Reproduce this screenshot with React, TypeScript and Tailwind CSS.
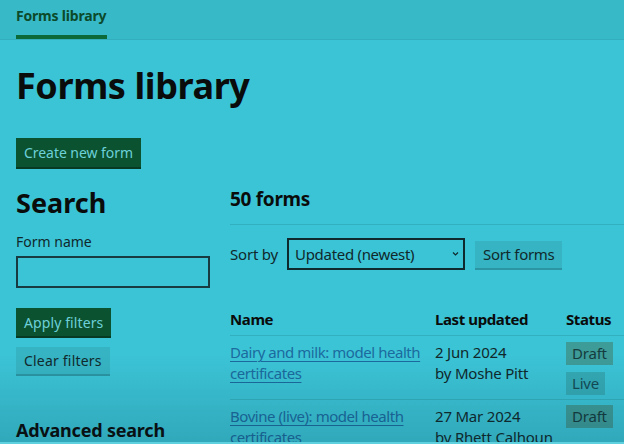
import React from "react";

const font = { fontFamily: '"Noto Sans", "Open Sans", Arial, sans-serif' };

function Tag({ children, live }: { children: React.ReactNode; live?: boolean }) {
  return (
    <span
      className={
        "inline-block px-[6px] h-[23px] leading-[23px] text-[15px] tracking-[-0.2px] " +
        (live ? "bg-[#34aab5] text-[#134b55]" : "bg-[#3d9b98] text-[#153c3e]")
      }
    >
      {children}
    </span>
  );
}

export default function App() {
  return (
    <div className="relative w-[624px] h-[444px] overflow-hidden bg-[#3bc4d6] text-[#0b1a1c]" style={font}>
      <header className="h-[40px] bg-[#38b9c8] border-b border-[#33aebd] px-4 flex items-stretch">
        <div className="relative flex items-center pb-[8px] w-[91px]">
          <span className="text-[14px] font-bold tracking-[-0.2px] text-[#0b4a2a]">Forms library</span>
          <span className="absolute left-0 right-0 bottom-0 h-[4px] bg-[#0b6a37]" />
        </div>
      </header>

      <main className="px-4">
        <h1 className="mt-[22px] text-[36px] leading-[48px] font-bold tracking-[-0.4px] text-[#0a0c0c]">Forms library</h1>

        <div className="mt-[28px]">
          <button className="h-[29px] px-[8px] bg-[#0b5230] text-[#6dd0d9] text-[14px] tracking-[-0.05px] shadow-[0_2px_0_#073a22]">
            Create new form
          </button>
        </div>

        <div className="mt-[16px] grid grid-cols-[194px_1fr] gap-x-[20px]">
          <div>
            <h2 className="text-[27px] leading-[40px] font-bold text-[#0a0c0c]">Search</h2>
            <label className="block mt-[9px] text-[14px] leading-[20px] text-[#10282b]">Form name</label>
            <div className="mt-[4px] h-[32px] border-2 border-[#173b40]" />
            <div className="mt-[20px]">
              <button className="h-[28px] px-[8px] bg-[#0b5230] text-[#6dd0d9] text-[14px] tracking-[0.1px] shadow-[0_2px_0_#073a22]">
                Apply filters
              </button>
            </div>
            <div className="mt-[11px]">
              <button className="h-[27px] px-[8px] bg-[#36b4c3] text-[#10292c] text-[14px] tracking-[0.2px] shadow-[0_2px_0_#2b95a3]">
                Clear filters
              </button>
            </div>
            <h3 className="mt-[43px] text-[18px] leading-[26px] font-bold tracking-[-0.2px] text-[#0a0c0c]">Advanced search</h3>
          </div>

          <div className="min-w-0 pt-[1px]">
            <h2 className="text-[19px] leading-[30px] font-bold tracking-[-0.3px] text-[#0a0c0c]">50 forms</h2>
            <div className="mt-[10px] border-t border-[#33b0bf] -mr-4" />
            <div className="mt-[13px] flex items-center">
              <span className="text-[15px] tracking-[-0.2px] text-[#10282b]">Sort by</span>
              <div className="ml-[9px] relative w-[178px] h-[32px] border-2 border-[#0f2a2e] flex items-center pl-[6px]">
                <span className="text-[15px] tracking-[-0.3px] text-[#10282b]">Updated (newest)</span>
                <svg className="absolute right-[4px] top-[11px]" width="7" height="6" viewBox="0 0 7 6">
                  <path d="M1 1.5 L3.5 4 L6 1.5" fill="none" stroke="#10282b" strokeWidth="1.2" />
                </svg>
              </div>
              <button className="ml-[10px] h-[27px] px-[8px] bg-[#36b4c3] text-[#10292c] text-[15px] tracking-[-0.3px] shadow-[0_2px_0_#2b95a3]">
                Sort forms
              </button>
            </div>

            <table className="mt-[39px] w-[calc(100%+16px)] border-collapse text-[15px] leading-[21px]">
              <thead>
                <tr className="border-b border-[#33b0bf] text-left">
                  <th className="w-[205px] font-bold pb-[5px] tracking-[-0.4px] text-[#0a0c0c]">Name</th>
                  <th className="w-[131px] font-bold pb-[5px] tracking-[-0.4px] text-[#0a0c0c]">Last updated</th>
                  <th className="font-bold pb-[5px] tracking-[-0.4px] text-[#0a0c0c]">Status</th>
                </tr>
              </thead>
              <tbody>
                <tr className="border-b border-[#33b0bf] align-top">
                  <td className="pt-[6px] pb-[4px]">
                    <a className="text-[#1c6a9e] tracking-[-0.45px] underline underline-offset-[3px] decoration-1">Dairy and milk: model health certificates</a>
                  </td>
                  <td className="pt-[6px] tracking-[-0.2px] text-[#10282b]">2 Jun 2024<br />by Moshe Pitt</td>
                  <td className="pt-[6px] pb-[4px]">
                    <div className="flex flex-col items-start gap-[7px]">
                      <Tag>Draft</Tag>
                      <Tag live>Live</Tag>
                    </div>
                  </td>
                </tr>
                <tr className="align-top">
                  <td className="pt-[6px]">
                    <a className="text-[#1c6a9e] tracking-[-0.45px] underline underline-offset-[3px] decoration-1">Bovine (live): model health certificates</a>
                  </td>
                  <td className="pt-[6px] tracking-[-0.2px] text-[#10282b]">27 Mar 2024<br />by Rhett Calhoun</td>
                  <td className="pt-[5px]">
                    <Tag>Draft</Tag>
                  </td>
                </tr>
              </tbody>
            </table>
          </div>
        </div>
      </main>

      <div className="pointer-events-none absolute left-0 right-0 bottom-0 h-[90px] bg-gradient-to-b from-transparent to-[rgba(0,40,60,0.18)]" />
      <div className="pointer-events-none absolute left-0 right-0 bottom-0 h-[2px] bg-[#5fd0dd]" />
    </div>
  );
}
